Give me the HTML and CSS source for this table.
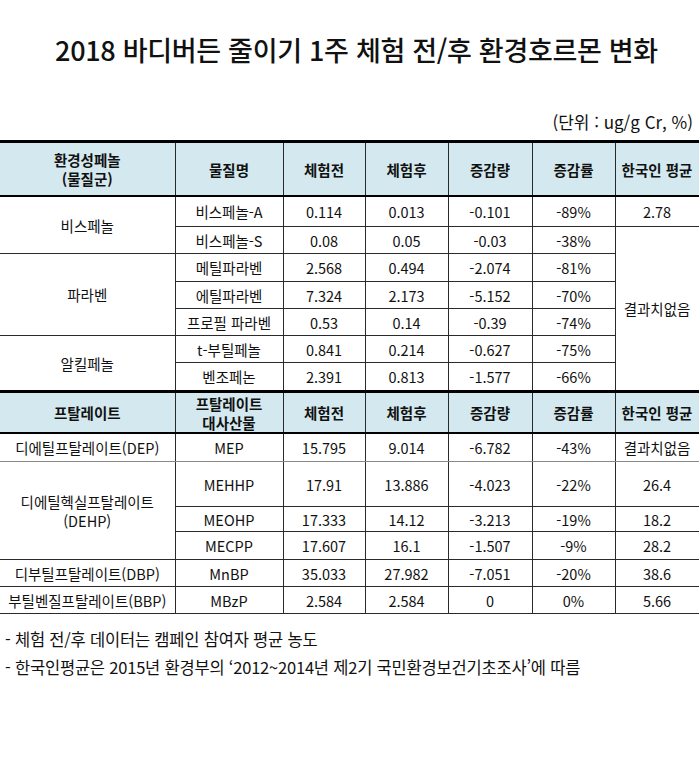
FILE: index.html
```html
<!DOCTYPE html>
<html lang="ko">
<head>
<meta charset="utf-8">
<link rel="stylesheet" href="styles.css">
</head>
<body>
<div class="page">
  <h1 class="title">2018 바디버든 줄이기 1주 체험 전/후 환경호르몬 변화</h1>
  <div class="unit">(단위 : ug/g Cr, %)</div>
  <table class="data">
    <colgroup>
      <col class="c1"><col class="c2"><col class="c3"><col class="c4"><col class="c5"><col class="c6"><col class="c7">
    </colgroup>
    <tr class="head h1">
      <th>환경성페놀<br>(물질군)</th><th>물질명</th><th>체험전</th><th>체험후</th><th>증감량</th><th>증감률</th><th>한국인 평균</th>
    </tr>
    <tr class="r30">
      <td rowspan="2" class="grp">비스페놀</td><td>비스페놀-A</td><td>0.114</td><td>0.013</td><td>-0.101</td><td>-89%</td><td>2.78</td>
    </tr>
    <tr class="r27 gend">
      <td>비스페놀-S</td><td>0.08</td><td>0.05</td><td>-0.03</td><td>-38%</td><td rowspan="6" class="nores">결과치없음</td>
    </tr>
    <tr class="r28">
      <td rowspan="3" class="grp">파라벤</td><td>메틸파라벤</td><td>2.568</td><td>0.494</td><td>-2.074</td><td>-81%</td>
    </tr>
    <tr class="r27">
      <td>에틸파라벤</td><td>7.324</td><td>2.173</td><td>-5.152</td><td>-70%</td>
    </tr>
    <tr class="r27 gend">
      <td>프로필 파라벤</td><td>0.53</td><td>0.14</td><td>-0.39</td><td>-74%</td>
    </tr>
    <tr class="r27">
      <td rowspan="2" class="grp">알킬페놀</td><td>t-부틸페놀</td><td>0.841</td><td>0.214</td><td>-0.627</td><td>-75%</td>
    </tr>
    <tr class="r28">
      <td>벤조페논</td><td>2.391</td><td>0.813</td><td>-1.577</td><td>-66%</td>
    </tr>
    <tr class="head h2">
      <th>프탈레이트</th><th>프탈레이트<br>대사산물</th><th>체험전</th><th>체험후</th><th>증감량</th><th>증감률</th><th>한국인 평균</th>
    </tr>
    <tr class="r28 lg">
      <td class="grp">디에틸프탈레이트(DEP)</td><td>MEP</td><td>15.795</td><td>9.014</td><td>-6.782</td><td>-43%</td><td>결과치없음</td>
    </tr>
    <tr class="r45">
      <td rowspan="3" class="grp">디에틸헥실프탈레이트<br>(DEHP)</td><td>MEHHP</td><td>17.91</td><td>13.886</td><td>-4.023</td><td>-22%</td><td>26.4</td>
    </tr>
    <tr class="r25">
      <td>MEOHP</td><td>17.333</td><td>14.12</td><td>-3.213</td><td>-19%</td><td>18.2</td>
    </tr>
    <tr class="r28">
      <td>MECPP</td><td>17.607</td><td>16.1</td><td>-1.507</td><td>-9%</td><td>28.2</td>
    </tr>
    <tr class="r27">
      <td class="grp">디부틸프탈레이트(DBP)</td><td>MnBP</td><td>35.033</td><td>27.982</td><td>-7.051</td><td>-20%</td><td>38.6</td>
    </tr>
    <tr class="r27">
      <td class="grp">부틸벤질프탈레이트(BBP)</td><td>MBzP</td><td>2.584</td><td>2.584</td><td>0</td><td>0%</td><td>5.66</td>
    </tr>
  </table>
  <ul class="notes">
    <li>- 체험 전/후 데이터는 캠페인 참여자 평균 농도</li>
    <li>- 한국인평균은 2015년 환경부의 ‘2012~2014년 제2기 국민환경보건기초조사’에 따름</li>
  </ul>
</div>
</body>
</html>
```

FILE: styles.css
```css
html, body {
  margin: 0;
  padding: 0;
  background: #fff;
}
body {
  font-family: "Noto Sans CJK KR", "Noto Sans", sans-serif;
  color: #111;
}
.page {
  width: 699px;
  padding-top: 30px;
}
.title {
  margin: 0;
  padding-left: 14px;
  text-align: center;
  font-size: 27px;
  font-weight: 500;
  line-height: 40px;
  letter-spacing: -0.3px;
}
.unit {
  margin-top: 41px;
  text-align: right;
  padding-right: 6px;
  font-size: 17px;
  line-height: 22px;
}
.data {
  margin-top: 7px;
  width: 699px;
  border-collapse: collapse;
  table-layout: fixed;
  font-size: 14.5px;
}
.c1 { width: 175px; }
.c2 { width: 108px; }
.c3 { width: 82px; }
.c4 { width: 83px; }
.c5 { width: 84px; }
.c6 { width: 83px; }
.c7 { width: 84px; }
.data td, .data th {
  border: 1px solid #2a2a2a;
  padding: 0;
  text-align: center;
  vertical-align: middle;
  line-height: 19px;
  white-space: nowrap;
}
.data td:first-child, .data th:first-child { border-left: none; }
.head th {
  background: #d3e9ef;
  font-weight: 700;
  border-top: 3px solid #000;
  border-bottom: 2px solid #000;
}
.h1 th { height: 52px; }
.h2 th { height: 39px; }
.r25 td { height: 24px; }
.r27 td { height: 26px; }
.r28 td { height: 27px; }
.r30 td { height: 29px; }
.r45 td { height: 44px; }
.lg td { border-bottom-color: #888; }
.notes {
  list-style: none;
  margin: 11px 0 0;
  padding: 0 0 0 5px;
  font-size: 16.5px;
  line-height: 28px;
  letter-spacing: -0.2px;
}
```
